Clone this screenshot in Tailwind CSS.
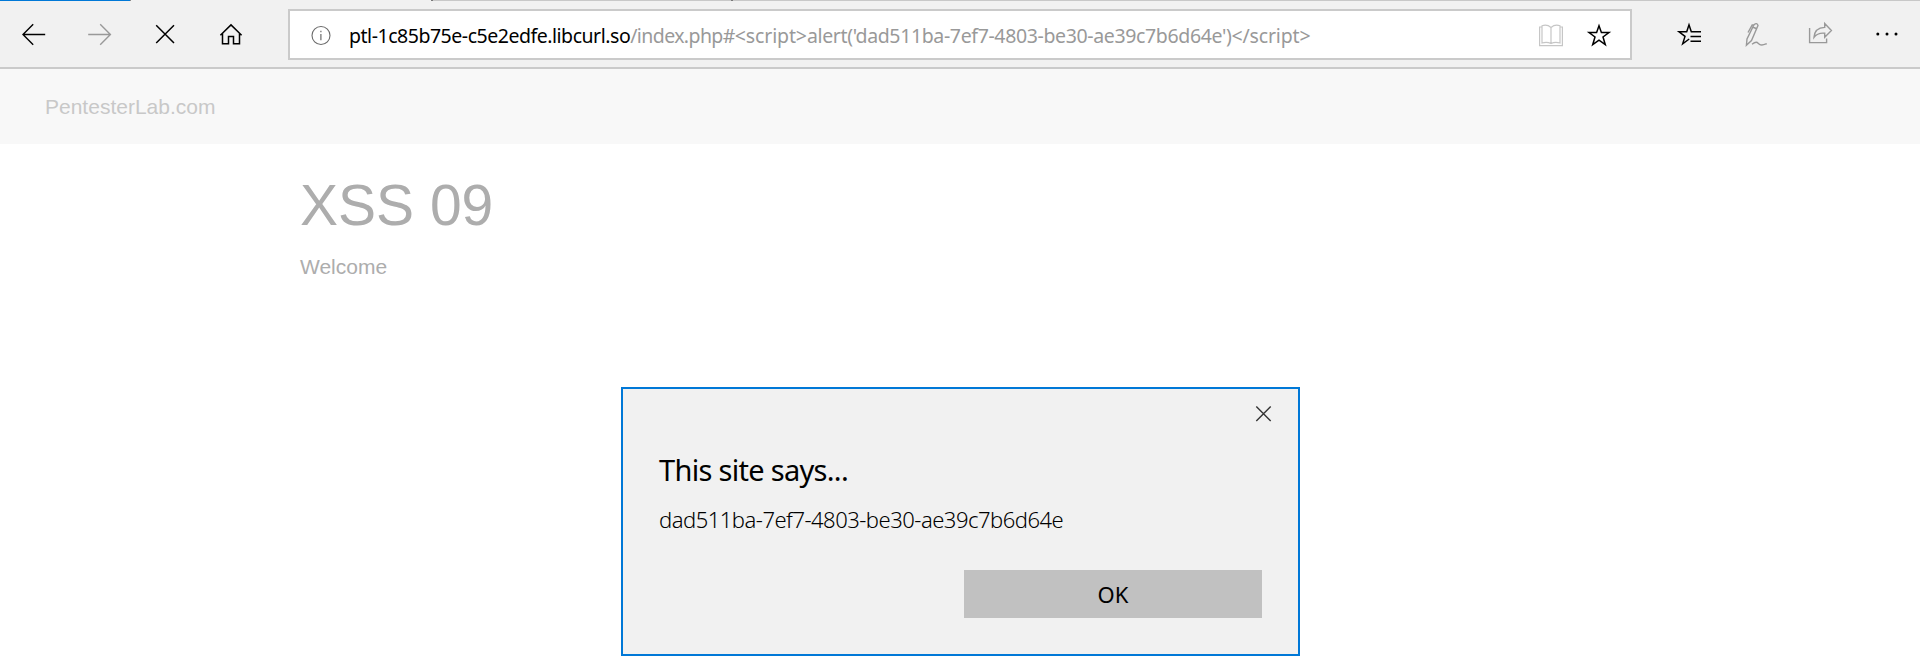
<!DOCTYPE html>
<html lang="en">
<head>
<meta charset="utf-8">
<title>XSS 09</title>
<script src="https://cdn.jsdelivr.net/npm/@tailwindcss/browser@4"></script>
</head>
<body class="relative h-[656px] w-[1920px] overflow-hidden bg-white font-['Liberation_Sans',Arial,sans-serif]">
<header class="flex h-[69px] flex-col border-b-2 border-[#cacaca] bg-[#f1f1f1] font-['Noto_Sans',sans-serif]">
  <!-- lower edge of the tab strip -->
  <div class="flex h-px shrink-0">
    <div class="w-[130px] bg-[#0078d7]"></div>
    <div class="w-px bg-[#8a8a8a]"></div>
    <div class="w-[300px]"></div>
    <div class="w-[2px] bg-[#7a7a7a]"></div>
    <div class="w-[298px] bg-[#c8c8c8]"></div>
    <div class="w-[2px] bg-[#7a7a7a]"></div>
    <div class="flex-1 bg-[#c8c8c8]"></div>
  </div>
  <div class="flex h-[66px]">
    <nav class="flex w-[288px] pl-px text-black">
      <svg class="h-[66px] w-[66px]" viewBox="1 1 66 66" fill="none" stroke="currentColor" stroke-width="1.4"><path d="M45.2 34.5H23M33.2 24.3L23 34.5L33.2 44.7"/></svg>
      <svg class="h-[66px] w-[66px] text-[#999]" viewBox="67 1 66 66" fill="none" stroke="currentColor" stroke-width="1.4"><path d="M88.2 34.5H110.4M100.2 24.3L110.4 34.5L100.2 44.7"/></svg>
      <svg class="h-[66px] w-[66px]" viewBox="133 1 66 66" fill="none" stroke="currentColor" stroke-width="1.5"><path d="M156.2 25.2L174 43M174 25.2L156.2 43"/></svg>
      <svg class="h-[66px] w-[66px]" viewBox="199 1 66 66" fill="none" stroke="currentColor" stroke-width="1.5"><path d="M220.4 35.2L231 24.9L241.6 35.2M222.5 33.4V43.7H228.5V36.5H233.5V43.7H239.5V33.4"/></svg>
    </nav>
    <div class="mt-2 flex h-[51px] w-[1344px] border-2 border-[#cacaca] bg-white">
      <svg class="h-[47px] w-[58px]" viewBox="290 11 58 47" fill="none" stroke="#6b6b6b" stroke-width="1.1"><circle cx="321" cy="35.5" r="9"/><path d="M320.9 34V40.2M320.9 30.8V32.2" stroke-width="1.2"/></svg>
      <div class="flex w-[1176px] items-center whitespace-nowrap pl-px pt-[2px] text-[19.5px] text-[#999]"><span class="tracking-[-0.47px] text-black">ptl-1c85b75e-c5e2edfe.libcurl.so</span><span class="tracking-[-0.6px]">/index.php#</span><span class="tracking-[-0.12px]">&lt;script&gt;</span><span class="tracking-[-0.36px]">alert('dad511ba-7ef7-4803-be30-ae39c7b6d64e')</span><span class="tracking-[-0.15px]">&lt;/script&gt;</span></div>
      <svg class="h-[47px] w-[54px]" viewBox="1524 11 54 47" fill="none" stroke="#c6c6c6" stroke-width="1.2"><path d="M1551 27.5Q1547 24 1542 25.8V43Q1547 41.3 1551 43.6Q1555 41.3 1560 43V25.8Q1555 24 1551 27.5V43.6M1542 27H1539.6V45.6H1562.4V27H1560"/></svg>
      <svg class="h-[47px] w-[46px]" viewBox="1578 11 46 47" fill="none" stroke="#000" stroke-width="1.5"><path d="M1599 25.8L1601.4 32.5H1609L1603 37L1605.3 44.7L1599 40.2L1592.7 44.7L1595 37L1589 32.5H1596.6Z"/></svg>
    </div>
    <div class="ml-6 flex w-[264px]">
      <svg class="h-[66px] w-[66px]" viewBox="1656 1 66 66" fill="none" stroke="#000" stroke-width="1.5"><path d="M1701 31.8H1691.3L1689 24.8L1686.7 31.8H1679L1685 36.4L1682.7 43.8L1689.2 39M1690.5 36.5H1701M1690.5 41.2H1701"/></svg>
      <svg class="h-[66px] w-[66px]" viewBox="1722 1 66 66" fill="none" stroke="#999" stroke-width="1.4"><path d="M1746.4 45.2L1747 39L1754 24.8Q1757 22.2 1758 25.5L1751.5 40.5ZM1754 24.8L1752.2 25L1748 32.5M1752.8 27L1757 29M1752 44.2C1757 40.5 1757.5 43 1759.5 44.3C1762 46 1764 44.8 1766.8 43.6"/></svg>
      <svg class="h-[66px] w-[66px]" viewBox="1788 1 66 66" fill="none" stroke="#999" stroke-width="1.4"><path d="M1809.6 28V42.6H1826.6V38.5M1814 37.4Q1814.5 27.8 1824.7 27.4V23.5L1831.4 30.5L1824.7 37.2V33.2Q1817.5 32.5 1814 37.4Z"/></svg>
      <svg class="h-[66px] w-[66px]" viewBox="1854 1 66 66" fill="#000"><circle cx="1877.8" cy="34" r="1.5"/><circle cx="1887" cy="34" r="1.5"/><circle cx="1896" cy="34" r="1.5"/></svg>
    </div>
  </div>
</header>
<div class="flex h-[75px] items-center bg-[#f8f8f8] pl-[45px] text-[21px] text-[#c8c8c8]">PentesterLab.com</div>
<main class="flex flex-col pl-[300px] pt-[31px] text-[#adadad]">
  <h1 class="h-[60px] text-[57px] leading-[60px]">XSS 09</h1>
  <p class="mt-[17px] text-[21px] leading-[30px]">Welcome</p>
</main>
<section class="absolute left-[621px] top-[387px] flex h-[269px] w-[679px] flex-col border-2 border-[#0078d7] bg-[#f1f1f1] px-9 font-['Noto_Sans',sans-serif] text-black">
  <svg class="-mr-[13px] mt-3 h-6 w-6 self-end" viewBox="1251 401 24 24" fill="none" stroke="#333" stroke-width="1.4"><path d="M1256.3 406.5L1270.7 420.9M1270.7 406.5L1256.3 420.9"/></svg>
  <h2 class="mt-[25px] h-10 whitespace-nowrap text-[29px] leading-10 tracking-[-0.7px]">This site says...</h2>
  <p class="mt-3.5 h-[30px] whitespace-nowrap text-[22px] font-light leading-[30px] tracking-[-0.5px]">dad511ba-7ef7-4803-be30-ae39c7b6d64e</p>
  <button class="mt-9 h-12 w-[298px] self-end bg-[#c1c1c1] text-[22px]">OK</button>
</section>
</body>
</html>
